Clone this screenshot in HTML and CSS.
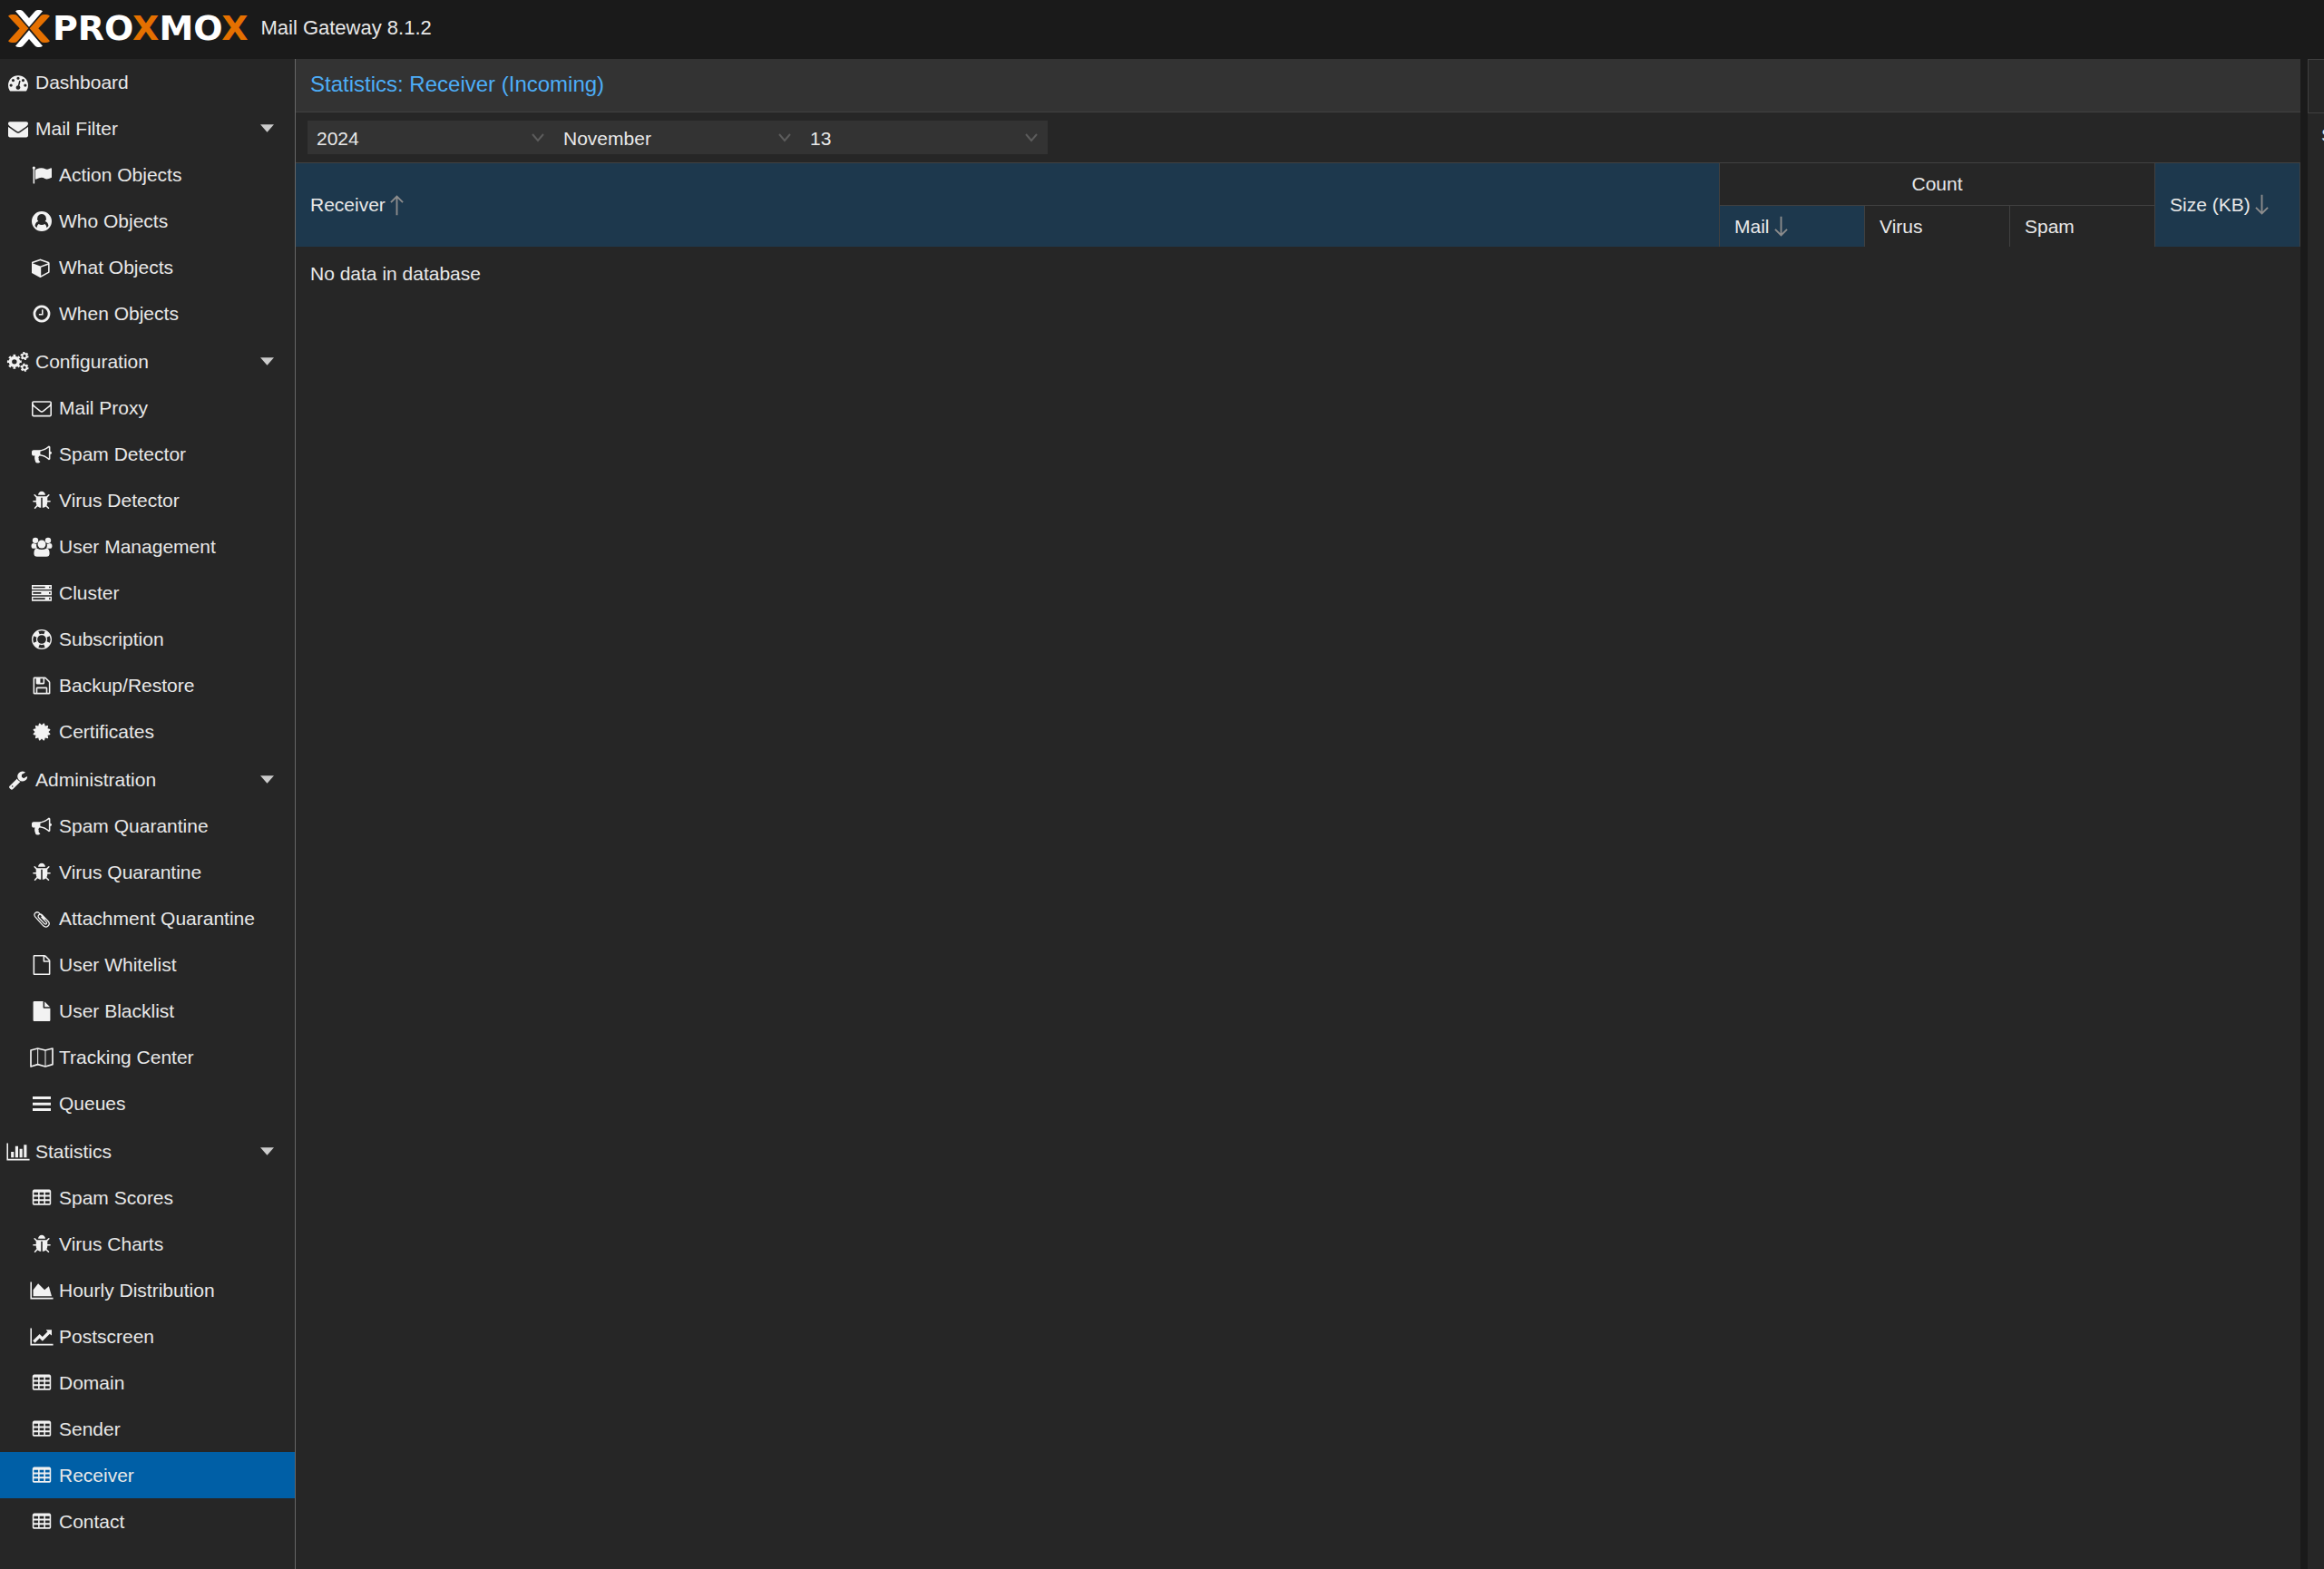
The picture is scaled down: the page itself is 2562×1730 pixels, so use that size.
FILE: index.html
```html
<!DOCTYPE html>
<html lang="en">
<head>
<meta charset="utf-8">
<title>Proxmox Mail Gateway</title>
<link rel="stylesheet" href="styles.css">
</head>
<body>
<svg class="sprite" aria-hidden="true">
  <symbol id="tachometer" viewBox="0 0 1792 1792"><path d="M384 1152q0-53-37.500-90.500t-90.500-37.500-90.500 37.500-37.500 90.500 37.500 90.500 90.500 37.500 90.500-37.500 37.500-90.500zm192-448q0-53-37.500-90.500t-90.500-37.500-90.500 37.500-37.500 90.500 37.500 90.500 90.500 37.500 90.500-37.500 37.500-90.500zm428 481l101-382q6-26-7.500-48.500t-38.500-29.500-48 6.500-30 39.500l-101 382q-60 5-107 43.500t-63 98.500q-20 77 20 146t117 89 146-20 89-117q16-60-6-117t-72-91zm660-33q0-53-37.500-90.500t-90.500-37.500-90.500 37.500-37.500 90.500 37.500 90.500 90.500 37.500 90.500-37.500 37.500-90.500zm-640-640q0-53-37.500-90.500t-90.500-37.500-90.500 37.500-37.500 90.500 37.500 90.500 90.500 37.500 90.500-37.500 37.500-90.500zm448 192q0-53-37.500-90.500t-90.500-37.500-90.500 37.500-37.500 90.500 37.500 90.500 90.500 37.500 90.500-37.500 37.500-90.500zm320 448q0 261-141 483-19 29-54 29h-1402q-35 0-54-29-141-221-141-483 0-182 71-348t191-286 286-191 348-71 348 71 286 191 191 286 71 348z"/></symbol>
  <symbol id="envelope" viewBox="0 0 1792 1792"><path d="M1792 710v794q0 66-47 113t-113 47h-1472q-66 0-113-47t-47-113v-794q44 49 101 87 362 246 497 345 57 42 92.500 65.500t94.500 48 110 24.500h2q51 0 110-24.500t94.500-48 92.500-65.500q170-123 498-345 57-39 100-87zm0-294q0 79-49 151t-122 123q-376 261-468 325-10 7-42.500 31t-54 38.500-52 32.500-57.500 27-50 9h-2q-23 0-50-9t-57.500-27-52-32.500-54-38.500-42.500-31q-91-64-262-182.500t-205-142.500q-62-42-117-115.500t-55-136.500q0-78 41.500-130t118.500-52h1472q65 0 112.500 47t47.500 113z"/></symbol>
  <symbol id="flag" viewBox="0 0 1792 1792"><path d="M320 256q0 72-64 110v1266q0 13-9.500 22.500t-22.500 9.500h-64q-13 0-22.500-9.500t-9.500-22.500v-1266q-64-38-64-110 0-53 37.500-90.500t90.500-37.500 90.500 37.500 37.500 90.500zm1472 64v763q0 25-12.500 38.500t-39.500 27.500q-215 116-369 116-61 0-123.500-22t-108.500-48-115.500-48-142.500-22q-192 0-464 146-17 9-33 9-26 0-45-19t-19-45v-742q0-32 31-55 21-14 79-43 236-120 421-120 107 0 200 29t219 88q38 19 88 19 54 0 117.500-21t110-47 88-47 54.500-21q26 0 45 19t19 45z"/></symbol>
  <symbol id="user-circle" viewBox="0 0 1792 1792"><path fill-rule="evenodd" d="M896 0a896 896 0 1 1 0 1792a896 896 0 1 1 0-1792zM896 240a400 400 0 0 0-300 664q-210 40-300 330q-20 70 60 160q40 45 90 90q20-240 170-350q110 92 280 92t280-92q150 110 170 350q50-45 90-90q80-90 60-160q-90-290-300-330a400 400 0 0 0-300-664z"/></symbol>
  <symbol id="cube" viewBox="64 0 1792 1792"><path d="M896 1629l640-349v-636l-640 233v752zm-64-865l698-254-698-254-698 254zm832-252v768q0 35-18 65t-49 47l-704 384q-28 16-61 16t-61-16l-704-384q-31-17-49-47t-18-65v-768q0-40 23-73t61-47l704-256q22-8 44-8t44 8l704 256q38 14 61 47t23 73z"/></symbol>
  <symbol id="clock" viewBox="0 0 1792 1792"><path d="M1024 544v448q0 14-9 23t-23 9h-320q-14 0-23-9t-9-23v-64q0-14 9-23t23-9h224v-352q0-14 9-23t23-9h64q14 0 23 9t9 23zm416 352q0-148-73-273t-198-198-273-73-273 73-198 198-73 273 73 273 198 198 273 73 273-73 198-198 73-273zm224 0q0 209-103 385.500t-279.500 279.500-385.500 103-385.500-103-279.500-279.500-103-385.500 103-385.500 279.500-279.500 385.500-103 385.500 103 279.500 279.500 103 385.500z"/></symbol>
  <symbol id="cogs" viewBox="0 0 78 69">
    <g fill="none" stroke="currentColor">
      <circle cx="26" cy="34" r="14" stroke-width="11"/>
      <circle cx="26" cy="34" r="21" stroke-width="8" pathLength="16" stroke-dasharray="1 1" stroke-dashoffset=".5"/>
      <circle cx="61" cy="14" r="8" stroke-width="6"/>
      <circle cx="61" cy="14" r="12" stroke-width="5" pathLength="12" stroke-dasharray="1 1"/>
      <circle cx="61" cy="54" r="8" stroke-width="6"/>
      <circle cx="61" cy="54" r="12" stroke-width="5" pathLength="12" stroke-dasharray="1 1"/>
    </g>
  </symbol>
  <symbol id="envelope-o" viewBox="0 0 1792 1792"><path d="M1664 1504v-768q-32 36-69 66-268 206-426 338-51 43-83 67t-86.500 48.500-102.500 24.500h-2q-48 0-102.500-24.500t-86.500-48.500-83-67q-158-132-426-338-37-30-69-66v768q0 13 9.500 22.500t22.500 9.500h1472q13 0 22.500-9.500t9.500-22.500zm0-1051v-24.500l-.5-13-3-12.500-5.500-9-9-7.500-14-2.500h-1472q-13 0-22.500 9.500t-9.500 22.500q0 168 147 284 193 152 401 317 6 5 35 29.500t46 37.500 44.500 31.500 50.500 27.500 43 9h2q20 0 43-9t50.500-27.500 44.500-31.500 46-37.500 35-29.500q208-165 401-317 54-43 100.500-115.500t46.500-131.500zm128-37v1088q0 66-47 113t-113 47h-1472q-66 0-113-47t-47-113v-1088q0-66 47-113t113-47h1472q66 0 113 47t47 113z"/></symbol>
  <symbol id="bullhorn" viewBox="0 0 1792 1792"><path d="M1664 640q53 0 90.500 37.500t37.500 90.500-37.500 90.500-90.500 37.500v384q0 52-38 90t-90 38q-417-347-812-380-58 19-91 66t-31 100.500 40 92.500q-20 33-23 65.500t6 58 33.500 55 48 50 61.500 50.500q-29 58-111.500 83t-168.500 11.500-132-55.500q-7-23-29.500-87.500t-32-94.500-23-89-15-101 3.500-98.500 22-110.500h-122q-66 0-113-47t-47-113v-192q0-66 47-113t113-47h480q435 0 896-384 52 0 90 38t38 90v384zm-128 604v-954q-394 302-768 343v270q377 42 768 341z"/></symbol>
  <symbol id="bug" viewBox="0 0 1792 1792"><path d="M1696 960q0 26-19 45t-45 19h-224q0 171-67 290l208 209q19 19 19 45t-19 45q-18 19-45 19t-45-19l-198-197q-5 5-15 13t-42 28.500-65 36.500-82 29-97 13v-896h-128v896q-51 0-101.500-13.500t-87-33-66-39-43.500-32.500l-15-14-183 207q-20 21-48 21-24 0-43-16-19-18-20.500-44.500t15.500-46.500l202-227q-58-114-58-274h-224q-26 0-45-19t-19-45 19-45 45-19h224v-294l-173-173q-19-19-19-45t19-45 45-19 45 19l173 173h844l173-173q19-19 45-19t45 19 19 45-19 45l-173 173v294h224q26 0 45 19t19 45zm-480-576h-640q0-133 93.500-226.500t226.500-93.500 226.500 93.500 93.500 226.500z"/></symbol>
  <symbol id="users" viewBox="0 0 78 69">
    <circle cx="17" cy="12" r="10"/><circle cx="61" cy="12" r="10"/>
    <path d="M3 32q0-10 8-10q6 3 10 2q-2 8 2 16h-12q-8 0-8-8zM75 32q0-10-8-10q-6 3-10 2q2 8-2 16h12q8 0 8-8z"/>
    <circle cx="39" cy="25" r="14"/>
    <path d="M12 57q0-17 11-17q16 8 32 0q11 0 11 17q0 11-11 11h-32q-11 0-11-11z"/>
  </symbol>
  <symbol id="server" viewBox="0 0 66 66"><path fill-rule="evenodd" d="M0 6h66v15h-66zM4 11v5h40v-5zM57 11v5h5v-5zM0 25h66v15h-66zM4 30v5h27v-5zM57 30v5h5v-5zM0 44h66v15h-66zM4 49v5h40v-5zM57 49v5h5v-5z"/></symbol>
  <symbol id="life-ring" viewBox="0 0 68 68">
    <g fill="none" stroke="currentColor">
      <circle cx="34" cy="34" r="32" stroke-width="4"/>
      <circle cx="34" cy="34" r="17" stroke-width="4"/>
      <circle cx="34" cy="34" r="24" stroke-width="15" pathLength="8" stroke-dasharray="1 1" stroke-dashoffset="-.5"/>
    </g>
  </symbol>
  <symbol id="floppy" viewBox="0 0 1792 1792"><path d="M512 1536h768v-384h-768v384zm896 0h128v-896q0-14-10-38.500t-20-34.500l-281-281q-10-10-34-20t-39-10v416q0 40-28 68t-68 28h-576q-40 0-68-28t-28-68v-416h-128v1280h128v-416q0-40 28-68t68-28h832q40 0 68 28t28 68v416zm-384-928v-320q0-13-9.500-22.500t-22.500-9.500h-192q-13 0-22.500 9.500t-9.500 22.500v320q0 13 9.500 22.500t22.500 9.500h192q13 0 22.500-9.500t9.500-22.500zm640 32v928q0 40-28 68t-68 28h-1344q-40 0-68-28t-28-68v-1344q0-40 28-68t68-28h928q40 0 88 20t76 48l280 280q28 28 48 76t20 88z"/></symbol>
  <symbol id="certificate" viewBox="0 0 1792 1792"><path d="M1504 896l138 135q30 28 20 70-12 41-52 51l-188 48 53 186q12 41-19 70-29 31-70 19l-186-53-48 188q-10 40-51 52-12 2-19 2-31 0-51-22l-135-138-135 138q-28 30-70 20-41-11-51-52l-48-188-186 53q-41 12-70-19-31-29-19-70l53-186-188-48q-40-10-52-51-10-42 20-70l138-135-138-135q-30-28-20-70 12-41 52-51l188-48-53-186q-12-41 19-70 29-31 70-19l186 53 48-188q10-41 51-51 41-12 70 19l135 139 135-139q29-30 70-19 41 10 51 51l48 188 186-53q41-12 70 19 31 29 19 70l-53 186 188 48q40 10 52 51 10 42-20 70z"/></symbol>
  <symbol id="wrench" viewBox="0 0 1792 1792"><path d="M448 1472q0-26-19-45t-45-19-45 19-19 45 19 45 45 19 45-19 19-45zm644-420l-682 682q-37 37-90 37-52 0-91-37l-106-108q-38-36-38-90 0-53 38-91l681-681q39 98 114.500 173.500t173.500 114.500zm634-435q0 39-23 106-47 134-164.500 217.500t-258.500 83.500q-185 0-316.500-131.500t-131.500-316.500 131.500-316.500 316.500-131.500q58 0 121.500 16.500t107.500 46.500q16 11 16 28t-16 28l-293 169v224l193 107q5-3 79-48.500t135.500-81 70.500-35.500q15 0 23.500 10t8.500 25z"/></symbol>
  <symbol id="paperclip" viewBox="0 0 69 69"><path fill="none" stroke="currentColor" stroke-width="4" stroke-linecap="round" d="M45 35L27 16C18 6 3 17 12 28L40 59C51 69 67 56 57 44L36 22C28 14 17 24 25 32L44 52C50 56 54 50 50 46L34 29"/></symbol>
  <symbol id="file-o" viewBox="0 0 1792 1792"><path d="M1596 380q28 28 48 76t20 88v1152q0 40-28 68t-68 28h-1344q-40 0-68-28t-28-68v-1600q0-40 28-68t68-28h896q40 0 88 20t76 48zm-444-244v376h376q-10-29-22-41l-313-313q-12-12-41-22zm384 1528v-1024h-416q-40 0-68-28t-28-68v-416h-768v1536h1280z"/></symbol>
  <symbol id="file" viewBox="0 0 1792 1792"><path d="M1152 512v-472q22 14 36 28l408 408q14 14 28 36h-472zm-128 32q0 40 28 68t68 28h544v1056q0 40-28 68t-68 28h-1344q-40 0-68-28t-28-68v-1600q0-40 28-68t68-28h800v544z"/></symbol>
  <symbol id="map" viewBox="0 0 78 66"><g fill="none" stroke="currentColor" stroke-linejoin="round"><path stroke-width="5" d="M3 9L26 3L51 9L75 3V56L51 63L26 56L3 63Z"/><path stroke-width="3" d="M26 3V56M51 9V63"/></g></symbol>
  <symbol id="bars" viewBox="0 0 66 66"><path d="M3 9h60v9h-60zM3 29h60v9h-60zM3 48h60v9h-60z"/></symbol>
  <symbol id="bar-chart" viewBox="0 0 2048 1792"><path d="M640 896v512h-256v-512h256zm384-512v1024h-256v-1024h256zm1024 1152v128h-2048v-1536h128v1408h1920zm-640-896v768h-256v-768h256zm384-384v1152h-256v-1152h256z"/></symbol>
  <symbol id="table" viewBox="0 0 1792 1792"><path fill-rule="evenodd" d="M224 128h1344q66 0 113 47t47 113v1088q0 66-47 113t-113 47h-1344q-66 0-113-47t-47-113v-1088q0-66 47-113t113-47zM192 384v224h384v-224zM704 384v224h384v-224zM1216 384v224h384v-224zM192 768v224h384v-224zM704 768v224h384v-224zM1216 768v224h384v-224zM192 1152v224h384v-224zM704 1152v224h384v-224zM1216 1152v224h384v-224z"/></symbol>
  <symbol id="area-chart" viewBox="0 0 2048 1792"><path d="M2048 1536v128h-2048v-1536h128v1408h1920zm-384-1024l256 896h-1664v-576l448-576 576 576z"/></symbol>
  <symbol id="line-chart" viewBox="0 0 2048 1792"><path d="M2048 1536v128h-2048v-1536h128v1408h1920zm-128-1248v435q0 21-19.500 29.500t-35.500-7.500l-121-121-633 633q-10 10-23 10t-23-10l-233-233-416 416-192-192 585-585q10-10 23-10t23 10l233 233 464-464-121-121q-16-16-7.500-35.500t29.500-19.500h435q14 0 23 9t9 23z"/></symbol>
  <symbol id="caret" viewBox="0 0 16 9"><path d="M0 0h16l-8 9z"/></symbol>
  <symbol id="chevron" viewBox="0 0 14 10"><path fill="none" stroke="currentColor" stroke-width="2" d="M1 1l6 7l6-7"/></symbol>
  <symbol id="arrow-up" viewBox="0 0 16 24"><path fill="none" stroke="currentColor" stroke-width="2" d="M8 24V2M1 9l7-7l7 7"/></symbol>
  <symbol id="arrow-down" viewBox="0 0 16 24"><path fill="none" stroke="currentColor" stroke-width="2" d="M8 0v22M1 15l7 7l7-7"/></symbol>
</svg>

<header class="topbar">
  <svg class="logo-mark" viewBox="0 0 138 123" aria-hidden="true">
    <path fill="#e57000" d="M0 20Q4 15 12 15H20Q26 15 30 19L67 61L30 104Q26 108 20 108H12Q4 108 0 103L38 61ZM138 20Q134 15 126 15H118Q112 15 108 19L71 61L108 104Q112 108 118 108H126Q134 108 138 103L100 61Z"/>
    <path fill="#fff" d="M24 4Q29 0 36 0H40Q46 0 50 5L69 27L88 5Q92 0 98 0H102Q109 0 114 4L69 56ZM24 119Q29 123 36 123H40Q46 123 50 118L69 96L88 118Q92 123 98 123H102Q109 123 114 119L69 67Z"/>
  </svg>
  <span class="wordmark">PRO<span class="accent">X</span>MO<span class="accent">X</span></span>
  <span class="version">Mail Gateway 8.1.2</span>
</header>

<div class="shell">
  <nav class="sidebar" aria-label="Main">
    <a class="item top" href="#dashboard"><span class="slot"><svg class="icon"><use href="#tachometer"/></svg></span>Dashboard</a>

    <button class="item top" type="button" aria-expanded="true"><span class="slot"><svg class="icon"><use href="#envelope"/></svg></span>Mail Filter<svg class="caret"><use href="#caret"/></svg></button>
    <a class="item child" href="#action"><span class="slot"><svg class="icon"><use href="#flag"/></svg></span>Action Objects</a>
    <a class="item child" href="#who"><span class="slot"><svg class="icon"><use href="#user-circle"/></svg></span>Who Objects</a>
    <a class="item child" href="#what"><span class="slot"><svg class="icon"><use href="#cube"/></svg></span>What Objects</a>
    <a class="item child" href="#when"><span class="slot"><svg class="icon"><use href="#clock"/></svg></span>When Objects</a>

    <button class="item top" type="button" aria-expanded="true"><span class="slot"><svg class="icon wide"><use href="#cogs"/></svg></span>Configuration<svg class="caret"><use href="#caret"/></svg></button>
    <a class="item child" href="#proxy"><span class="slot"><svg class="icon"><use href="#envelope-o"/></svg></span>Mail Proxy</a>
    <a class="item child" href="#spam-detector"><span class="slot"><svg class="icon"><use href="#bullhorn"/></svg></span>Spam Detector</a>
    <a class="item child" href="#virus-detector"><span class="slot"><svg class="icon"><use href="#bug"/></svg></span>Virus Detector</a>
    <a class="item child" href="#user-management"><span class="slot"><svg class="icon wide"><use href="#users"/></svg></span>User Management</a>
    <a class="item child" href="#cluster"><span class="slot"><svg class="icon"><use href="#server"/></svg></span>Cluster</a>
    <a class="item child" href="#subscription"><span class="slot"><svg class="icon"><use href="#life-ring"/></svg></span>Subscription</a>
    <a class="item child" href="#backup"><span class="slot"><svg class="icon"><use href="#floppy"/></svg></span>Backup/Restore</a>
    <a class="item child" href="#certificates"><span class="slot"><svg class="icon"><use href="#certificate"/></svg></span>Certificates</a>

    <button class="item top" type="button" aria-expanded="true"><span class="slot"><svg class="icon"><use href="#wrench"/></svg></span>Administration<svg class="caret"><use href="#caret"/></svg></button>
    <a class="item child" href="#spam-quarantine"><span class="slot"><svg class="icon"><use href="#bullhorn"/></svg></span>Spam Quarantine</a>
    <a class="item child" href="#virus-quarantine"><span class="slot"><svg class="icon"><use href="#bug"/></svg></span>Virus Quarantine</a>
    <a class="item child" href="#attachment-quarantine"><span class="slot"><svg class="icon"><use href="#paperclip"/></svg></span>Attachment Quarantine</a>
    <a class="item child" href="#whitelist"><span class="slot"><svg class="icon"><use href="#file-o"/></svg></span>User Whitelist</a>
    <a class="item child" href="#blacklist"><span class="slot"><svg class="icon"><use href="#file"/></svg></span>User Blacklist</a>
    <a class="item child" href="#tracking"><span class="slot"><svg class="icon wide"><use href="#map"/></svg></span>Tracking Center</a>
    <a class="item child" href="#queues"><span class="slot"><svg class="icon"><use href="#bars"/></svg></span>Queues</a>

    <button class="item top" type="button" aria-expanded="true"><span class="slot"><svg class="icon wide"><use href="#bar-chart"/></svg></span>Statistics<svg class="caret"><use href="#caret"/></svg></button>
    <a class="item child" href="#spam-scores"><span class="slot"><svg class="icon"><use href="#table"/></svg></span>Spam Scores</a>
    <a class="item child" href="#virus-charts"><span class="slot"><svg class="icon"><use href="#bug"/></svg></span>Virus Charts</a>
    <a class="item child" href="#hourly"><span class="slot"><svg class="icon wide"><use href="#area-chart"/></svg></span>Hourly Distribution</a>
    <a class="item child" href="#postscreen"><span class="slot"><svg class="icon wide"><use href="#line-chart"/></svg></span>Postscreen</a>
    <a class="item child" href="#domain"><span class="slot"><svg class="icon"><use href="#table"/></svg></span>Domain</a>
    <a class="item child" href="#sender"><span class="slot"><svg class="icon"><use href="#table"/></svg></span>Sender</a>
    <a class="item child selected" href="#receiver" aria-current="page"><span class="slot"><svg class="icon"><use href="#table"/></svg></span>Receiver</a>
    <a class="item child" href="#contact"><span class="slot"><svg class="icon"><use href="#table"/></svg></span>Contact</a>
  </nav>

  <main class="panel">
    <h1 class="panel-title">Statistics: Receiver (Incoming)</h1>
    <form class="toolbar">
      <div class="field"><select aria-label="Year"><option>2024</option></select><svg class="chevron"><use href="#chevron"/></svg></div>
      <div class="field"><select aria-label="Month"><option>November</option></select><svg class="chevron"><use href="#chevron"/></svg></div>
      <div class="field"><select aria-label="Day"><option>13</option></select><svg class="chevron"><use href="#chevron"/></svg></div>
    </form>
    <table class="grid">
      <colgroup><col><col class="num"><col class="num"><col class="num"><col class="num"></colgroup>
      <thead>
        <tr>
          <th class="sorted" rowspan="2" scope="col"><button type="button">Receiver<svg class="arrow"><use href="#arrow-up"/></svg></button></th>
          <th class="group" colspan="3" scope="colgroup">Count</th>
          <th class="sorted" rowspan="2" scope="col"><button type="button">Size (KB)<svg class="arrow"><use href="#arrow-down"/></svg></button></th>
        </tr>
        <tr>
          <th class="sorted" scope="col"><button type="button">Mail<svg class="arrow"><use href="#arrow-down"/></svg></button></th>
          <th scope="col"><button type="button">Virus</button></th>
          <th scope="col"><button type="button">Spam</button></th>
        </tr>
      </thead>
      <tbody><tr><td colspan="5">No data in database</td></tr></tbody>
    </table>
  </main>

  <aside class="side-panel" aria-label="Details">
    <div class="side-head"></div>
    <div class="side-body">S</div>
  </aside>
</div>
</body>
</html>
```

FILE: styles.css
```css
* { box-sizing: border-box; }

body {
  margin: 0;
  min-height: 100vh;
  display: flex;
  flex-direction: column;
  overflow: hidden;
  background: #1a1a1a;
  color: #e8e8e8;
  font: 21px/26px "Liberation Sans", Arial, sans-serif;
}

svg { fill: currentColor; flex: none; }
.sprite { position: absolute; width: 0; height: 0; }
button, select { font: inherit; color: inherit; }

/* Top bar */
.topbar {
  display: flex;
  align-items: center;
  height: 65px;
  padding: 0 9px 3px;
}
.logo-mark { width: 46px; height: 41px; }
.wordmark {
  margin-left: 3px;
  font: bold 38px/40px "DejaVu Sans", sans-serif;
  color: #fff;
}
.accent { color: #e57000; }
.version { margin-left: 14px; font-size: 22px; }

.shell { flex: 1; display: flex; }

/* Navigation */
.sidebar {
  flex: none;
  width: 326px;
  background: #262626;
  border-right: 1px solid #666;
}
.item {
  display: flex;
  align-items: center;
  gap: 6px;
  width: 100%;
  height: 51px;
  padding: 0 23px 0 7px;
  border: 0;
  background: none;
  text-align: left;
  text-decoration: none;
  white-space: nowrap;
  color: inherit;
}
.item.child { padding-left: 33px; }
.child + .top { margin-top: 2px; }
.item.selected { background: #005fa6; }
.slot { flex: none; display: flex; justify-content: center; width: 26px; }
.icon { width: 22px; height: 22px; color: #f2f2f2; }
.icon.wide { width: 26px; }
.caret { width: 15px; height: 9px; margin-left: auto; color: #ccc; }

/* Statistics panel */
.panel { flex: 1; min-width: 0; background: #262626; }
.panel-title {
  height: 59px;
  margin: 0;
  padding: 0 16px 3px;
  background: #333;
  border-bottom: 1px solid #404040;
  color: #4dadf7;
  font-size: 24px;
  font-weight: normal;
  line-height: 55px;
}
.toolbar { display: flex; height: 55px; padding: 9px 13px; }
.field { display: grid; width: 272px; align-items: center; background: #333; }
.field > * { grid-area: 1 / 1; }
.field select {
  width: 100%;
  height: 37px;
  padding: 3px 10px 0;
  border: 0;
  appearance: none;
  background: none;
}
.chevron {
  justify-self: end;
  width: 14px;
  height: 10px;
  margin-right: 11px;
  color: #5c5c5c;
  pointer-events: none;
}

.grid { width: 100%; table-layout: fixed; border-collapse: separate; border-spacing: 0; }
.num { width: 160px; }
.grid th {
  height: 46px;
  padding: 0;
  border: solid #404040;
  border-width: 1px 1px 0 0;
  font-weight: normal;
  text-align: left;
}
.grid .group { height: 47px; text-align: center; }
.grid .sorted { background: #1d384d; }
.grid th button {
  display: flex;
  align-items: center;
  gap: 5px;
  width: 100%;
  padding: 0 16px;
  border: 0;
  background: none;
}
.arrow { width: 15px; height: 24px; color: #8c8c8c; }
.grid td { height: 60px; padding: 0 16px; }

/* Partly visible panel on the right */
.side-panel {
  flex: none;
  width: 26px;
  overflow: hidden;
  border-left: 8px solid #1a1a1a;
  background: #262626;
}
.side-head { height: 60px; border: solid #404040; border-width: 1px 0 1px 1px; }
.side-body { padding: 11px 0 0 15px; }
```
